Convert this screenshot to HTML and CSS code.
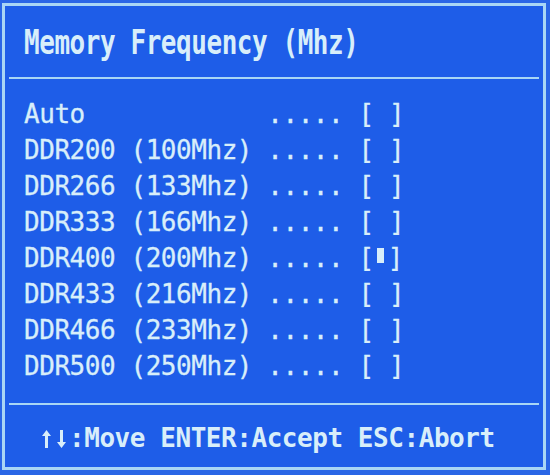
FILE: index.html
```html
<!DOCTYPE html>
<html lang="en">
  <head>
    <meta charset="UTF-8" />
    <meta name="viewport" content="width=device-width, initial-scale=1.0" />
    <title>Memory Frequency (Mhz)</title>
    <link rel="stylesheet" href="styles.css">
  </head>
  <body>
    <div class="frame">
      <div class="header">
        <span class="title">Memory Frequency (Mhz)</span>
      </div>
      <div class="rule"></div>
      <div class="options">
        <div class="option">Auto            ..... [ ]</div>
        <div class="option">DDR200 (100Mhz) ..... [ ]</div>
        <div class="option">DDR266 (133Mhz) ..... [ ]</div>
        <div class="option">DDR333 (166Mhz) ..... [ ]</div>
        <div class="option">DDR400 (200Mhz) ..... [<span class="mark"></span>]</div>
        <div class="option">DDR433 (216Mhz) ..... [ ]</div>
        <div class="option">DDR466 (233Mhz) ..... [ ]</div>
        <div class="option">DDR500 (250Mhz) ..... [ ]</div>
      </div>
      <div class="rule"></div>
      <div class="footer">
        <svg class="arrows" width="30" height="20" viewBox="0 0 30 20" aria-label="↑↓">
          <path d="M7.5 1 L12 7 H9 V19 H6 V7 H3 Z" />
          <path d="M22.5 19 L27 13 H24 V1 H21 V13 H18 Z" />
        </svg><span>:Move ENTER:Accept ESC:Abort</span>
      </div>
    </div>
  </body>
</html>
```

FILE: styles.css
```css
body {
    margin: 0;
    background-color: #2a66e6; /* Screen blue outside the box */
    font-family: "DejaVu Sans Mono", "Liberation Mono", monospace;
    color: #d8eefa; /* Pale BIOS text */
}

.frame {
    margin: 3px 4px 0 2px;
    height: 461px;
    border: 3px solid #a9d6f5; /* Light blue box line */
    background-color: #1e5de8;
    display: flex;
    flex-direction: column;
}

.header {
    height: 71px;
    display: flex;
    align-items: center;
    padding-left: 19px;
}

.title {
    display: inline-block;
    font-size: 26px;
    font-weight: bold;
    letter-spacing: -0.45px;
    transform: scaleY(1.28); /* Tall bitmap title glyphs */
    white-space: pre;
}

.rule {
    height: 2px;
    margin: 0 4px;
    background-color: #a9d6f5;
}

.options {
    height: 324px;
    padding: 17px 0 0 19px;
    box-sizing: border-box;
}

.option {
    font-size: 26px;
    line-height: 36px;
    letter-spacing: -0.45px;
    white-space: pre;
    -webkit-text-stroke: 0.3px #d8eefa; /* Slightly heavier strokes */
}

.mark {
    display: inline-block;
    width: 7px;
    height: 15px;
    margin: 0 4px 4px 3px;
    background-color: #d8eefa;
}

.footer {
    flex: 1;
    display: flex;
    align-items: center;
    padding: 4px 0 0 34px;
    font-size: 26px;
    font-weight: bold;
    letter-spacing: -0.45px;
    white-space: pre;
}

.arrows {
    fill: #d8eefa;
    margin-top: 2px;
}
```
